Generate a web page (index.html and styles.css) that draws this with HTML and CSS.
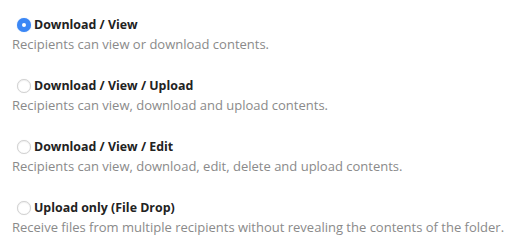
FILE: index.html
```html
<!DOCTYPE html>
<html lang="en">
<head>
<meta charset="utf-8">
<link rel="stylesheet" href="styles.css">
</head>
<body>
<div class="options">
  <div class="option">
    <div class="title-row"><span class="radio checked"></span><span class="title">Download / View</span></div>
    <div class="desc">Recipients can view or download contents.</div>
  </div>
  <div class="option">
    <div class="title-row"><span class="radio"></span><span class="title">Download / View / Upload</span></div>
    <div class="desc">Recipients can view, download and upload contents.</div>
  </div>
  <div class="option">
    <div class="title-row"><span class="radio"></span><span class="title">Download / View / Edit</span></div>
    <div class="desc">Recipients can view, download, edit, delete and upload contents.</div>
  </div>
  <div class="option">
    <div class="title-row"><span class="radio"></span><span class="title">Upload only (File Drop)</span></div>
    <div class="desc">Receive files from multiple recipients without revealing the contents of the folder.</div>
  </div>
</div>
</body>
</html>
```
FILE: styles.css
```css
html, body {
  margin: 0;
  padding: 0;
  background: #fff;
}
body {
  font-family: "Open Sans", "Liberation Sans", sans-serif;
  font-size: 13px;
}
.options {
  display: flex;
  flex-direction: column;
  gap: 25px;
  padding: 17px 0 0 12px;
}
.option {
  display: flex;
  flex-direction: column;
  gap: 3px;
}
.title-row {
  display: flex;
  align-items: center;
  height: 16px;
}
.radio {
  box-sizing: border-box;
  width: 14px;
  height: 14px;
  margin: 0 3px 0 5px;
  border-radius: 50%;
  border: 1px solid #d2d2d2;
  background: #fff;
  box-shadow: 0 0 1px rgba(0,0,0,0.12), inset 0 1px 1px rgba(0,0,0,0.05);
  display: flex;
  align-items: center;
  justify-content: center;
}
.radio.checked {
  border: none;
  background: #3b87f5;
  box-shadow: 0 0 1px rgba(59,135,245,0.6);
}
.radio.checked::after {
  content: "";
  width: 4px;
  height: 4px;
  border-radius: 50%;
  background: #fff;
}
.title {
  font-weight: 700;
  font-size: 12.4px;
  color: #222;
  line-height: 16px;
}
.desc {
  color: #8a8a8a;
  line-height: 17px;
}
```
